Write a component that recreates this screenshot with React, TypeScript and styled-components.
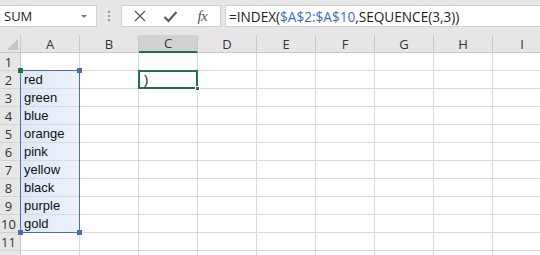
import React from "react";
import styled, { createGlobalStyle } from "styled-components";

const GlobalStyle = createGlobalStyle`
  html, body {
    margin: 0;
    padding: 0;
    background: #ffffff;
  }
  * {
    box-sizing: border-box;
  }
`;

const COLS = ["A", "B", "C", "D", "E", "F", "G", "H", "I"];
const COLORS = ["red", "green", "blue", "orange", "pink", "yellow", "black", "purple", "gold"];
const ROW_COUNT = 12;

const Window = styled.div`
  width: 540px;
  height: 255px;
  overflow: hidden;
  background: #ffffff;
  font-family: "Open Sans", "Liberation Sans", sans-serif;
`;

const FormulaBar = styled.div`
  display: flex;
  align-items: flex-start;
  height: 35px;
  padding-top: 5px;
  background: #e6e6e6;
`;

const NameBox = styled.div`
  display: flex;
  align-items: center;
  justify-content: space-between;
  width: 97px;
  height: 22px;
  padding: 0 9px 0 4px;
  background: #ffffff;
  border: 1px solid #d2d2d2;
  border-left: none;
  font-size: 13px;
  color: #222222;
`;

const DropArrow = styled.span`
  width: 0;
  height: 0;
  border-left: 3px solid transparent;
  border-right: 3px solid transparent;
  border-top: 3px solid #777777;
`;

const Splitter = styled.div`
  display: flex;
  flex-direction: column;
  align-items: center;
  gap: 2px;
  width: 24px;
  padding-top: 6px;
`;

const Dot = styled.span`
  width: 2px;
  height: 2px;
  background: #9a9a9a;
`;

const FxButtons = styled.div`
  display: flex;
  align-items: center;
  justify-content: space-around;
  width: 100px;
  height: 22px;
  padding: 0 2px;
  background: #ffffff;
  border: 1px solid #d2d2d2;
`;

const IconButton = styled.span`
  display: flex;
  align-items: center;
  justify-content: center;
  width: 24px;
  height: 20px;
  color: #555555;
`;

const FxLabel = styled.span`
  font-family: "Liberation Serif", "DejaVu Serif", serif;
  font-style: italic;
  font-size: 15px;
  color: #555555;
  letter-spacing: -0.5px;
`;

const FormulaInput = styled.div`
  flex: 1;
  display: flex;
  align-items: center;
  height: 22px;
  margin-left: 4px;
  padding-left: 3px;
  background: #ffffff;
  border: 1px solid #d2d2d2;
  border-right: none;
  font-size: 13.6px;
  color: #222222;
  white-space: nowrap;
`;

const RangeRef = styled.span`
  color: #3a6cc6;
`;

const Sheet = styled.div`
  display: grid;
  grid-template-columns: 21px repeat(9, 59px);
  grid-auto-rows: 18px;
`;

const Corner = styled.div`
  grid-row: 1;
  grid-column: 1;
  display: flex;
  align-items: flex-end;
  justify-content: flex-end;
  padding: 0 2px 2px 0;
  background: #e6e6e6;
  border-right: 1px solid #c8c8c8;
  border-bottom: 1px solid #c8c8c8;
`;

const CornerMark = styled.span`
  width: 0;
  height: 0;
  border-left: 11px solid transparent;
  border-bottom: 11px solid #c4c4c4;
`;

const ColHeader = styled.div<{ $col: number; $active?: boolean }>`
  grid-row: 1;
  grid-column: ${({ $col }) => $col};
  display: flex;
  align-items: center;
  justify-content: center;
  background: ${({ $active }) => ($active ? "#d2d2d2" : "#e6e6e6")};
  border-right: 1px solid #c8c8c8;
  border-bottom: ${({ $active }) => ($active ? "2px solid #217346" : "1px solid #c8c8c8")};
  font-size: 13px;
  color: #333333;
`;

const RowHeader = styled.div<{ $row: number }>`
  grid-row: ${({ $row }) => $row};
  grid-column: 1;
  display: flex;
  align-items: center;
  justify-content: center;
  padding-right: 3px;
  background: #e6e6e6;
  border-right: 1px solid #c8c8c8;
  border-bottom: 1px solid #d4d4d4;
  font-size: 13px;
  color: #333333;
`;

const Cell = styled.div<{ $row: number; $col: number; $selected?: boolean }>`
  grid-row: ${({ $row }) => $row};
  grid-column: ${({ $col }) => $col};
  display: flex;
  align-items: center;
  padding-left: 3px;
  background: ${({ $selected }) =>
    $selected ? "linear-gradient(to right, #dde7f5, #edf2fa)" : "#ffffff"};
  border-right: 1px solid #dadada;
  border-bottom: 1px solid #dadada;
  font-family: "Liberation Sans", Arial, sans-serif;
  font-size: 13px;
  color: #111111;
`;

const RangeBorder = styled.div`
  position: relative;
  grid-column: 2;
  grid-row: 3 / 12;
  margin: -1px 0 0 -1px;
  border: 1.5px solid #4a6cb3;
  pointer-events: none;
`;

const Handle = styled.span<{ $top?: boolean; $left?: boolean; $color?: string }>`
  position: absolute;
  width: 5px;
  height: 5px;
  background: ${({ $color }) => $color || "#4a6cb3"};
  ${({ $top }) => ($top ? "top: -3px;" : "bottom: -3px;")}
  ${({ $left }) => ($left ? "left: -3px;" : "right: -3px;")}
`;

const ActiveCell = styled.div`
  position: relative;
  grid-column: 4;
  grid-row: 3;
  margin: -1px 0 0 -1px;
  display: flex;
  align-items: center;
  padding-left: 4px;
  border: 2px solid #217346;
  background: #ffffff;
  font-family: "Liberation Sans", Arial, sans-serif;
  font-size: 13px;
  color: #111111;
`;

const FillHandle = styled.span`
  position: absolute;
  right: -4px;
  bottom: -4px;
  width: 5px;
  height: 5px;
  background: #217346;
  border: 1px solid #ffffff;
`;

const CancelIcon = () => (
  <svg width="14" height="14" viewBox="0 0 14 14">
    <path d="M2 2 L12 12 M12 2 L2 12" stroke="#555" strokeWidth="1.3" fill="none" />
  </svg>
);

const EnterIcon = () => (
  <svg width="15" height="13" viewBox="0 0 15 13">
    <path d="M1.5 7 L5.5 11 L13.5 2" stroke="#555" strokeWidth="2" fill="none" />
  </svg>
);

const App = () => {
  const rows = Array.from({ length: ROW_COUNT }, (_, i) => i + 1);

  return (
    <Window>
      <GlobalStyle />
      <FormulaBar>
        <NameBox>
          SUM
          <DropArrow />
        </NameBox>
        <Splitter>
          <Dot />
          <Dot />
          <Dot />
        </Splitter>
        <FxButtons>
          <IconButton>
            <CancelIcon />
          </IconButton>
          <IconButton>
            <EnterIcon />
          </IconButton>
          <IconButton>
            <FxLabel>fx</FxLabel>
          </IconButton>
        </FxButtons>
        <FormulaInput>
          =INDEX(<RangeRef>$A$2:$A$10</RangeRef>,SEQUENCE(3,3))
        </FormulaInput>
      </FormulaBar>

      <Sheet>
        <Corner>
          <CornerMark />
        </Corner>
        {COLS.map((c, ci) => (
          <ColHeader key={c} $col={ci + 2} $active={c === "C"}>
            {c}
          </ColHeader>
        ))}
        {rows.map((r) => (
          <React.Fragment key={r}>
            <RowHeader $row={r + 1}>{r}</RowHeader>
            {COLS.map((c, ci) => {
              const inRange = ci === 0 && r >= 2 && r <= 10;
              return (
                <Cell key={c} $row={r + 1} $col={ci + 2} $selected={inRange}>
                  {inRange ? COLORS[r - 2] : ""}
                </Cell>
              );
            })}
          </React.Fragment>
        ))}
        <RangeBorder>
          <Handle $top $left $color="#217346" />
          <Handle $top />
          <Handle $left />
          <Handle />
        </RangeBorder>
        <ActiveCell>
          )
          <FillHandle />
        </ActiveCell>
      </Sheet>
    </Window>
  );
};

export default App;
